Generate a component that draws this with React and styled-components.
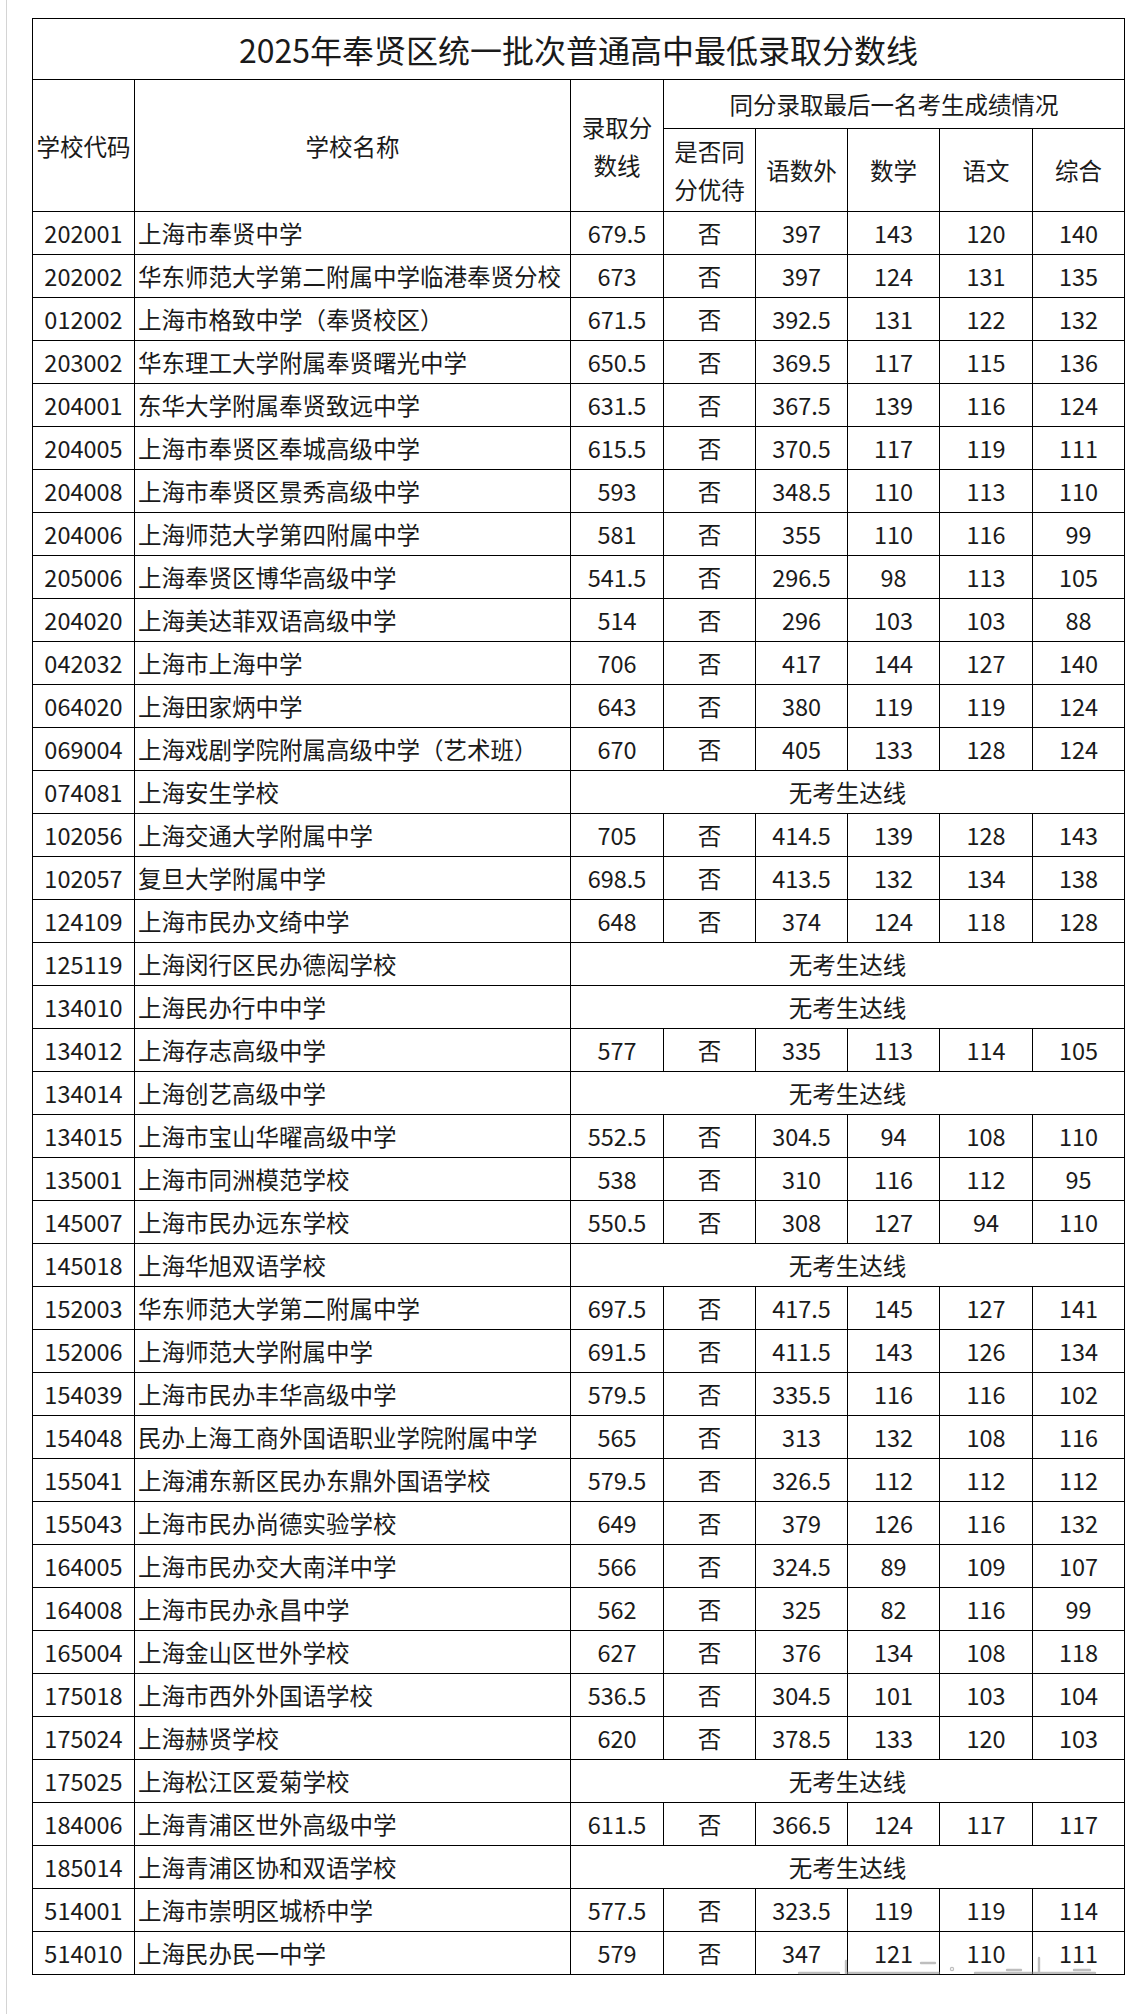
import React from 'react';
import styled, { createGlobalStyle } from 'styled-components';

const GlobalStyle = createGlobalStyle`
  html, body {
    margin: 0;
    padding: 0;
    background: #ffffff;
  }
  body {
    font-family: "Noto Sans CJK SC", "Noto Sans", "Liberation Sans", sans-serif;
    color: #1a1a1a;
  }
`;

const Page = styled.div`
  position: relative;
  box-sizing: border-box;
  width: 1121px;
  min-height: 2014px;
  margin-left: 6px;
  padding: 18px 0 0 25px;
  border-left: 1px solid #d4d4d4;
`;

const Sheet = styled.table`
  border-collapse: collapse;
  table-layout: fixed;
  width: 1093px;

  th,
  td {
    border: 1px solid #000;
    font-weight: 400;
    overflow: hidden;
  }
`;

const TitleRow = styled.tr`
  height: 61px;
`;

const TitleCell = styled.th`
  padding: 0;
  font-size: 32px;
  line-height: 40px;
  text-align: center;
  vertical-align: middle;
  white-space: nowrap;
`;

const HeadRow = styled.tr`
  height: ${p => p.$h}px;
`;

const HeadCell = styled.th`
  padding: 0 ${p => (p.$tight ? 0 : 10)}px;
  font-size: 23.5px;
  line-height: 38px;
  text-align: center;
  vertical-align: middle;
  white-space: ${p => (p.$tight ? 'nowrap' : 'normal')};
`;

const Row = styled.tr`
  height: 43px;
`;

const Cell = styled.td`
  padding: 0 0 0 ${p => (p.$left ? 3 : 0)}px;
  font-size: 23.5px;
  line-height: 30px;
  vertical-align: middle;
  text-align: ${p => (p.$left ? 'left' : 'center')};
  white-space: nowrap;
`;

const Watermark = styled.svg`
  position: absolute;
  left: 786px;
  top: 1952px;
  opacity: 0.55;
  filter: blur(0.6px);
`;

const widths = [102, 436, 93, 92, 92, 92, 93, 92];

const rows = [
  ['202001', '上海市奉贤中学', '679.5', '否', '397', '143', '120', '140'],
  ['202002', '华东师范大学第二附属中学临港奉贤分校', '673', '否', '397', '124', '131', '135'],
  ['012002', '上海市格致中学（奉贤校区）', '671.5', '否', '392.5', '131', '122', '132'],
  ['203002', '华东理工大学附属奉贤曙光中学', '650.5', '否', '369.5', '117', '115', '136'],
  ['204001', '东华大学附属奉贤致远中学', '631.5', '否', '367.5', '139', '116', '124'],
  ['204005', '上海市奉贤区奉城高级中学', '615.5', '否', '370.5', '117', '119', '111'],
  ['204008', '上海市奉贤区景秀高级中学', '593', '否', '348.5', '110', '113', '110'],
  ['204006', '上海师范大学第四附属中学', '581', '否', '355', '110', '116', '99'],
  ['205006', '上海奉贤区博华高级中学', '541.5', '否', '296.5', '98', '113', '105'],
  ['204020', '上海美达菲双语高级中学', '514', '否', '296', '103', '103', '88'],
  ['042032', '上海市上海中学', '706', '否', '417', '144', '127', '140'],
  ['064020', '上海田家炳中学', '643', '否', '380', '119', '119', '124'],
  ['069004', '上海戏剧学院附属高级中学（艺术班）', '670', '否', '405', '133', '128', '124'],
  ['074081', '上海安生学校'],
  ['102056', '上海交通大学附属中学', '705', '否', '414.5', '139', '128', '143'],
  ['102057', '复旦大学附属中学', '698.5', '否', '413.5', '132', '134', '138'],
  ['124109', '上海市民办文绮中学', '648', '否', '374', '124', '118', '128'],
  ['125119', '上海闵行区民办德闳学校'],
  ['134010', '上海民办行中中学'],
  ['134012', '上海存志高级中学', '577', '否', '335', '113', '114', '105'],
  ['134014', '上海创艺高级中学'],
  ['134015', '上海市宝山华曜高级中学', '552.5', '否', '304.5', '94', '108', '110'],
  ['135001', '上海市同洲模范学校', '538', '否', '310', '116', '112', '95'],
  ['145007', '上海市民办远东学校', '550.5', '否', '308', '127', '94', '110'],
  ['145018', '上海华旭双语学校'],
  ['152003', '华东师范大学第二附属中学', '697.5', '否', '417.5', '145', '127', '141'],
  ['152006', '上海师范大学附属中学', '691.5', '否', '411.5', '143', '126', '134'],
  ['154039', '上海市民办丰华高级中学', '579.5', '否', '335.5', '116', '116', '102'],
  ['154048', '民办上海工商外国语职业学院附属中学', '565', '否', '313', '132', '108', '116'],
  ['155041', '上海浦东新区民办东鼎外国语学校', '579.5', '否', '326.5', '112', '112', '112'],
  ['155043', '上海市民办尚德实验学校', '649', '否', '379', '126', '116', '132'],
  ['164005', '上海市民办交大南洋中学', '566', '否', '324.5', '89', '109', '107'],
  ['164008', '上海市民办永昌中学', '562', '否', '325', '82', '116', '99'],
  ['165004', '上海金山区世外学校', '627', '否', '376', '134', '108', '118'],
  ['175018', '上海市西外外国语学校', '536.5', '否', '304.5', '101', '103', '104'],
  ['175024', '上海赫贤学校', '620', '否', '378.5', '133', '120', '103'],
  ['175025', '上海松江区爱菊学校'],
  ['184006', '上海青浦区世外高级中学', '611.5', '否', '366.5', '124', '117', '117'],
  ['185014', '上海青浦区协和双语学校'],
  ['514001', '上海市崇明区城桥中学', '577.5', '否', '323.5', '119', '119', '114'],
  ['514010', '上海民办民一中学', '579', '否', '347', '121', '110', '111'],
];

function ScoreRow({ data }) {
  const [code, name, ...scores] = data;
  return (
    <Row>
      <Cell>{code}</Cell>
      <Cell $left>{name}</Cell>
      {scores.length === 0 ? (
        <Cell colSpan={6}>无考生达线</Cell>
      ) : (
        scores.map((s, i) => <Cell key={i}>{s}</Cell>)
      )}
    </Row>
  );
}

// faint cut-off watermark under the last row
function Mark() {
  return (
    <Watermark width="310" height="30" viewBox="0 0 310 30">
      <g stroke="#8a8a8a" strokeWidth="2.4" strokeLinecap="round" fill="none">
        <path d="M6 21 H46" />
        <path d="M53 9 V21 H146" />
        <path d="M128 11 H142" />
        <circle cx="159" cy="17" r="1.6" strokeWidth="1.2" />
        <path d="M182 21 H302" />
        <path d="M214 18 H228" />
        <path d="M246 6 V21" />
        <path d="M281 18 H297" />
      </g>
    </Watermark>
  );
}

export default function App() {
  return (
    <>
      <GlobalStyle />
      <Page>
        <Sheet>
          <colgroup>
            {widths.map((w, i) => (
              <col key={i} style={{ width: w }} />
            ))}
          </colgroup>
          <thead>
            <TitleRow>
              <TitleCell colSpan={8}>2025年奉贤区统一批次普通高中最低录取分数线</TitleCell>
            </TitleRow>
            <HeadRow $h={49}>
              <HeadCell rowSpan={2} $tight>学校代码</HeadCell>
              <HeadCell rowSpan={2}>学校名称</HeadCell>
              <HeadCell rowSpan={2}>录取分数线</HeadCell>
              <HeadCell colSpan={5}>同分录取最后一名考生成绩情况</HeadCell>
            </HeadRow>
            <HeadRow $h={83}>
              <HeadCell>是否同分优待</HeadCell>
              <HeadCell>语数外</HeadCell>
              <HeadCell>数学</HeadCell>
              <HeadCell>语文</HeadCell>
              <HeadCell>综合</HeadCell>
            </HeadRow>
          </thead>
          <tbody>
            {rows.map(r => (
              <ScoreRow key={r[0]} data={r} />
            ))}
          </tbody>
        </Sheet>
        <Mark />
      </Page>
    </>
  );
}
